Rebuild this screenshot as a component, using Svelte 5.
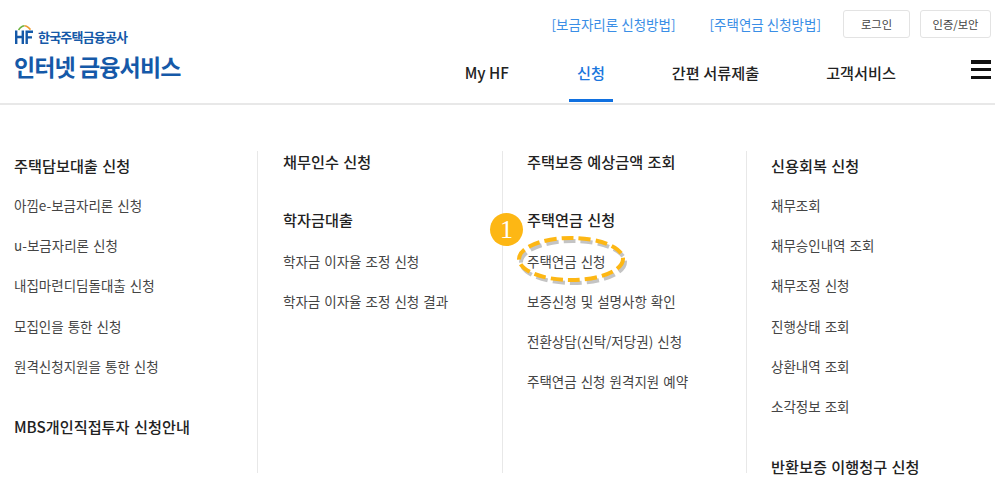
<script>
  // Menu data: 'h' rows are group headings, everything else is a plain link
  const COLUMNS = [
    { cls: 'first', rows: [
      { h: '주택담보대출 신청' },
      { t: '아낌e-보금자리론 신청' },
      { t: 'u-보금자리론 신청' },
      { t: '내집마련디딤돌대출 신청' },
      { t: '모집인을 통한 신청' },
      { t: '원격신청지원을 통한 신청' },
      { h: 'MBS개인직접투자 신청안내', gap: true },
    ] },
    { cls: 'second', rows: [
      { h: '채무인수 신청' },
      { h: '학자금대출', gap: true },
      { t: '학자금 이자율 조정 신청' },
      { t: '학자금 이자율 조정 신청 결과' },
    ] },
    { cls: 'second', rows: [
      { h: '주택보증 예상금액 조회' },
      { h: '주택연금 신청', gap: true, badge: true },
      { t: '주택연금 신청', mark: true },
      { t: '보증신청 및 설명사항 확인' },
      { t: '전환상담(신탁/저당권) 신청' },
      { t: '주택연금 신청 원격지원 예약' },
    ] },
    { cls: 'first', rows: [
      { h: '신용회복 신청' },
      { t: '채무조회' },
      { t: '채무승인내역 조회' },
      { t: '채무조정 신청' },
      { t: '진행상태 조회' },
      { t: '상환내역 조회' },
      { t: '소각정보 조회' },
      { h: '반환보증 이행청구 신청', gap: true },
    ] },
  ];
  const NAV = ['My HF', '신청', '간편 서류제출', '고객서비스'];
</script>

<div class="page">
  <header class="top">
    <div class="brand">
      <div class="org">
        <svg class="hf" width="20" height="20" viewBox="0 0 20 20" aria-hidden="true">
          <path d="M4.5 5 L6.5 2.6 Q8.5 0.8 10.5 0.8" fill="none" stroke="#6db33f" stroke-width="1.6"/>
          <path d="M10.5 0.8 Q12.5 0.8 14.5 2.6 L16.5 4.6" fill="none" stroke="#f09a2e" stroke-width="1.6"/>
          <path d="M2.2 5.5v13.5M8.8 5.5v13.5M2.2 12H8.8" fill="none" stroke="#1559a8" stroke-width="2.4"/>
          <path d="M12.7 19V6.7H19M12.7 12.4H18" fill="none" stroke="#1559a8" stroke-width="2.4"/>
        </svg>
        <span>한국주택금융공사</span>
      </div>
      <div class="service">인터넷 금융서비스</div>
    </div>
    <div class="right">
      <div class="util">
        <a class="help" href="#a">[보금자리론 신청방법]</a>
        <a class="help" href="#b">[주택연금 신청방법]</a>
        <button class="btn login">로그인</button>
        <button class="btn">인증/보안</button>
      </div>
      <nav class="gnb">
        {#each NAV as n, i}
          <a href="#n" class="gnb-item" class:on={i === 1}>{n}</a>
        {/each}
        <span class="burger" aria-hidden="true"><i></i><i></i><i></i></span>
      </nav>
    </div>
  </header>

  <main class="menu">
    {#each COLUMNS as col}
      <section class="col {col.cls}">
        {#each col.rows as r}
          {#if r.h}
            <h3 class:gap={r.gap}>
              {#if r.badge}<span class="badge">1</span>{/if}
              {r.h}
            </h3>
          {:else}
            <a href="#m" class="item">
              {#if r.mark}
                <svg class="ring" width="120" height="60" viewBox="0 0 120 60" aria-hidden="true">
                  <ellipse cx="60" cy="31" rx="52" ry="21" fill="none" stroke="#c4c4c4" stroke-width="4" stroke-dasharray="12 5"/>
                  <ellipse cx="58" cy="28" rx="52" ry="21" fill="none" stroke="#fdb714" stroke-width="4" stroke-dasharray="12 5"/>
                </svg>
              {/if}
              {r.t}
            </a>
          {/if}
        {/each}
      </section>
    {/each}
  </main>
</div>

<style>
  :global(body) { margin: 0; background: #fff; }
  .page { width: 995px; height: 499px; overflow: hidden; font-family: "Noto Sans CJK KR", "Noto Sans", sans-serif; color: #333; }
  a { text-decoration: none; color: inherit; }

  .top { height: 105px; box-sizing: border-box; border-bottom: 2px solid #e8e8e8; display: flex; justify-content: space-between; padding: 0 4px 0 14px; }
  .brand { padding-top: 25px; }
  .org { display: flex; align-items: center; gap: 4px; height: 22px; color: #1559a8; font-size: 13px; font-weight: 700; letter-spacing: -0.8px; }
  .org span { margin-top: 1px; }
  .hf { flex: none; margin-top: -3px; }
  .service { margin-top: 1px; font-size: 23px; line-height: 36px; font-weight: 700; color: #1559a8; letter-spacing: -0.9px; }

  .right { display: flex; flex-direction: column; align-items: flex-end; }
  .util { display: flex; align-items: center; padding-top: 10px; font-size: 13.5px; }
  .help { color: #3a8ee6; margin-right: 34px; line-height: 28px; }
  .help + .help { margin-right: 22px; }
  .btn { width: 71px; height: 28px; padding: 0; box-sizing: border-box; background: #fff; border: 1px solid #e3e3e3; border-radius: 3px; font: inherit; font-size: 11.3px; color: #444; }
  .login { width: 67px; margin-right: 10px; }

  .gnb { display: flex; align-items: stretch; height: 64px; font-size: 15.2px; font-weight: 500; color: #222; }
  .gnb-item { display: flex; align-items: center; box-sizing: border-box; height: 64px; padding: 7px 8px 0; margin-right: 51px; border-bottom: 3px solid transparent; }
  .gnb-item:first-child { margin-left: -1px; padding-right: 9px; }
  .gnb-item.on { color: #1a76dd; border-bottom-color: #1070e0; }
  .burger { display: flex; flex-direction: column; justify-content: space-between; width: 20px; height: 19px; margin: 22px 0 0 16px; }
  .burger i { display: block; height: 3.5px; background: #111; }

  .menu { display: grid; grid-template-columns: 257px 245px 244px 249px; padding-top: 46px; }
  .col { height: 322px; box-sizing: border-box; padding-left: 24px; border-left: 1px solid #e8e8e8; }
  .col:first-child { padding-left: 14px; border-left: 0; }
  .col:nth-child(2) { padding-left: 25px; }
  .first { padding-top: 4px; }
  h3 { position: relative; margin: 0 0 19.75px; height: 20px; line-height: 20px; font-size: 15.2px; font-weight: 500; color: #222; word-spacing: 1px; }
  h3.gap { margin-top: 40px; }
  .second h3.gap { margin-top: 38px; margin-bottom: 22px; }
  .item { position: relative; display: block; height: 20px; line-height: 20px; margin-bottom: 20.25px; font-size: 13.5px; color: #444; word-spacing: 1px; }
  .second .item { margin-bottom: 20px; }

  .badge { position: absolute; left: -37px; top: 4px; width: 33px; height: 33px; border-radius: 50%; background: #fdb714; color: #fff; font-family: "Liberation Serif", serif; font-size: 26px; font-weight: 400; line-height: 33px; text-align: center; }
  .ring { position: absolute; left: -14px; top: -20px; }
</style>
